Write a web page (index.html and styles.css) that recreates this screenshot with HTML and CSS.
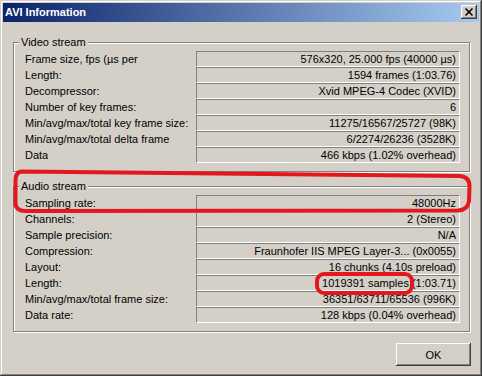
FILE: index.html
```html
<!DOCTYPE html>
<html>
<head>
<meta charset="utf-8">
<title>AVI Information</title>
<link rel="stylesheet" href="styles.css">
</head>
<body>
<div class="window">
  <div class="titlebar">
    <span class="title">AVI Information</span>
    <span class="close"><svg width="16" height="14" viewBox="0 0 16 14"><path d="M4.5 3.5 L11.5 10.5 M11.5 3.5 L4.5 10.5" stroke="#000" stroke-width="1.6" fill="none"/></svg></span>
  </div>
  <div class="client">
    <fieldset class="group video">
      <legend>Video stream</legend>
      <div class="row"><span class="label">Frame size, fps (µs per</span><span class="field">576x320, 25.000 fps (40000 µs)</span></div>
      <div class="row"><span class="label">Length:</span><span class="field">1594 frames (1:03.76)</span></div>
      <div class="row"><span class="label">Decompressor:</span><span class="field">Xvid MPEG-4 Codec (XVID)</span></div>
      <div class="row"><span class="label">Number of key frames:</span><span class="field">6</span></div>
      <div class="row"><span class="label">Min/avg/max/total key frame size:</span><span class="field">11275/16567/25727 (98K)</span></div>
      <div class="row"><span class="label">Min/avg/max/total delta frame</span><span class="field">6/2274/26236 (3528K)</span></div>
      <div class="row"><span class="label">Data</span><span class="field">466 kbps (1.02% overhead)</span></div>
    </fieldset>
    <fieldset class="group audio">
      <legend>Audio stream</legend>
      <div class="row"><span class="label">Sampling rate:</span><span class="field">48000Hz</span></div>
      <div class="row"><span class="label">Channels:</span><span class="field">2 (Stereo)</span></div>
      <div class="row"><span class="label">Sample precision:</span><span class="field">N/A</span></div>
      <div class="row"><span class="label">Compression:</span><span class="field">Fraunhofer IIS MPEG Layer-3... (0x0055)</span></div>
      <div class="row"><span class="label">Layout:</span><span class="field">16 chunks (4.10s preload)</span></div>
      <div class="row"><span class="label">Length:</span><span class="field">1019391 samples (1:03.71)</span></div>
      <div class="row"><span class="label">Min/avg/max/total frame size:</span><span class="field">36351/63711/65536 (996K)</span></div>
      <div class="row"><span class="label">Data rate:</span><span class="field">128 kbps (0.04% overhead)</span></div>
    </fieldset>
    <div class="actions"><button class="btn">OK</button></div>
  </div>
  <svg class="annot" width="482" height="376" viewBox="0 0 482 376">
    <path d="M22 171.5 L460 176 Q469.5 177 469.5 186 L469 201 Q468 210 458 210.5 L26 211 Q15.5 211 15.5 203 L15.5 181 Q15.5 171.5 22 171.5 Z" fill="none" stroke="#E3171E" stroke-width="4" stroke-linejoin="round"/>
    <rect x="317" y="274" width="95" height="19" rx="7" ry="7" fill="none" stroke="#E3171E" stroke-width="4"/>
  </svg>
</div>
</body>
</html>
```
FILE: styles.css
```css
* { box-sizing: border-box; }

body {
  margin: 0;
  background: #D4D0C8;
  font-family: "Liberation Sans", Arial, sans-serif;
  font-size: 11px;
  color: #000;
}

.window {
  position: relative;
  width: 482px;
  height: 376px;
  padding: 3px;
  background: #D4D0C8;
  box-shadow: inset -1px -1px #404040, inset 1px 1px #D4D0C8, inset -2px -2px #808080, inset 2px 2px #fff;
  display: flex;
  flex-direction: column;
}

.titlebar {
  height: 19px;
  flex: none;
  display: flex;
  align-items: center;
  justify-content: space-between;
  padding: 0 2px 1px 2px;
  background: linear-gradient(to right, #0A246A, #A6CAF0);
  color: #fff;
}

.title {
  font-weight: bold;
  font-size: 11px;
  line-height: 13px;
}

.close {
  width: 16px;
  height: 14px;
  display: flex;
  background: #D4D0C8;
  box-shadow: inset -1px -1px #404040, inset 1px 1px #fff, inset -2px -2px #808080;
}

.client {
  flex: 1;
  display: flex;
  flex-direction: column;
  padding: 14px 9px 0 10px;
}

.group {
  margin: 0;
  padding: 2px 9px 8px 5px;
  border: 1px solid #808080;
  box-shadow: inset 1px 1px 0 #fff, 1px 1px 0 #fff;
  min-width: 0;
}

.group legend {
  padding: 0 2px;
  line-height: 13px;
  background: #D4D0C8;
  position: relative;
}

.audio { margin-top: 8px; }

.row {
  display: grid;
  grid-template-columns: 171px 1fr;
  height: 16px;
  padding-left: 6px;
}

.label {
  line-height: 16px;
  white-space: nowrap;
  overflow: hidden;
}

.field {
  height: 16px;
  line-height: 14px;
  text-align: right;
  padding-right: 3px;
  border-top: 1px solid #808080;
  border-left: 1px solid #808080;
  border-bottom: 1px solid #fff;
  border-right: 1px solid #fff;
  white-space: nowrap;
}

.actions {
  display: flex;
  justify-content: flex-end;
  margin-top: 11px;
}

.btn {
  width: 75px;
  height: 23px;
  margin-right: -1px;
  font-family: "Liberation Sans", Arial, sans-serif;
  font-size: 11px;
  color: #000;
  background: #D4D0C8;
  border: none;
  padding: 0;
  box-shadow: inset -1px -1px #404040, inset 1px 1px #fff, inset -2px -2px #808080, inset 2px 2px #D4D0C8;
}

.annot {
  position: absolute;
  top: 0;
  left: 0;
  pointer-events: none;
}
```
